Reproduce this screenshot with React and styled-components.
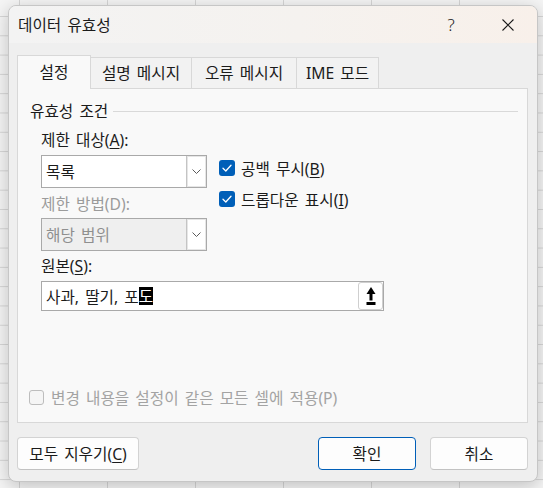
import styled, { createGlobalStyle } from "styled-components";

const GlobalStyle = createGlobalStyle`
  html, body {
    margin: 0;
    padding: 0;
  }
  body {
    width: 543px;
    height: 488px;
    overflow: hidden;
    background-color: #f5f5f5;
    background-image:
      linear-gradient(to right, #d6d6d6 1px, transparent 1px),
      linear-gradient(to bottom, #d6d6d6 1px, transparent 1px);
    background-size: 88px 100%, 100% 19.3px;
    background-position: 19px 0, 0 16px;
    font-family: "Noto Sans", "Noto Sans CJK KR", sans-serif;
    font-size: 15.7px;
    word-spacing: 2px;
    color: #1b1b1b;
  }
`;

const Page = styled.div`
  padding: 5px 0 0 8px;
`;

const Dialog = styled.div`
  width: 530px;
  height: 477px;
  box-sizing: border-box;
  border: 1px solid #c6c6c6;
  border-radius: 8px;
  background: #efefef;
  box-shadow: 0 4px 18px rgba(0, 0, 0, 0.22);
  overflow: hidden;
  display: flex;
  flex-direction: column;
`;

const TitleBar = styled.div`
  height: 37px;
  flex: none;
  display: flex;
  align-items: center;
  padding: 0 6px 0 9px;
  background: linear-gradient(to right, #f3f3f3 0%, #f5f2ef 55%, #f8f0ea 100%);
`;

const Title = styled.div`
  flex: 1;
  line-height: 20px;
  margin-top: 1px;
`;

const TitleButton = styled.div`
  width: 46px;
  height: 32px;
  display: flex;
  align-items: center;
  justify-content: center;
  font-size: 17px;
  font-weight: 300;
  margin-left: ${(p) => p.$gap || 0}px;
`;

const Body = styled.div`
  flex: 1;
  display: flex;
  flex-direction: column;
  padding: 12px 9px 11px 8px;
`;

const TabRow = styled.div`
  display: flex;
  align-items: flex-end;
  margin-bottom: -1px;
  position: relative;
  z-index: 1;
`;

const Tab = styled.div`
  width: ${(p) => p.$width}px;
  height: ${(p) => (p.$active ? 34 : 32)}px;
  box-sizing: border-box;
  border: 1px solid #d8d8d8;
  border-bottom: ${(p) => (p.$active ? "none" : "1px solid #d8d8d8")};
  background: ${(p) => (p.$active ? "#f9f9f9" : "#f2f2f2")};
  margin-left: ${(p) => (p.$first ? 0 : -1)}px;
  display: flex;
  align-items: center;
  justify-content: center;
  padding-bottom: ${(p) => (p.$active ? 3 : 1)}px;
`;

const Panel = styled.div`
  height: 335px;
  box-sizing: border-box;
  border: 1px solid #d8d8d8;
  background: #f9f9f9;
  display: flex;
  flex-direction: column;
`;

const GroupHeader = styled.div`
  display: flex;
  align-items: center;
  gap: 5px;
  margin: 12px 9px 0 12px;
  line-height: 20px;
`;

const GroupLine = styled.div`
  flex: 1;
  height: 1px;
  background: #d9d9d9;
  margin-top: 1px;
`;

const Fields = styled.div`
  padding-left: 23px;
`;

const Grid = styled.div`
  display: grid;
  grid-template-columns: 166px auto;
  column-gap: 12px;
`;

const Column = styled.div`
  display: flex;
  flex-direction: column;
`;

const Label = styled.div`
  line-height: 20px;
  margin-top: ${(p) => p.$top}px;
  color: ${(p) => (p.$disabled ? "#9b9b9b" : "#1b1b1b")};
  u {
    text-underline-offset: 2px;
  }
`;

const Select = styled.div`
  height: 33px;
  box-sizing: border-box;
  margin-top: ${(p) => p.$top}px;
  border: 1px solid #a9a9a9;
  background: ${(p) => (p.$disabled ? "#efefef" : "#ffffff")};
  color: ${(p) => (p.$disabled ? "#8f8f8f" : "#1b1b1b")};
  display: flex;
  align-items: center;
`;

const SelectText = styled.div`
  flex: 1;
  padding-left: 4px;
`;

const DropButton = styled.div`
  width: 20px;
  height: 100%;
  box-sizing: border-box;
  border-left: 1px solid #c4c4c4;
  box-shadow: inset 0 0 0 1px #e6e6e6;
  background: #fff;
  display: flex;
  align-items: center;
  justify-content: center;
`;

const CheckRow = styled.div`
  display: flex;
  align-items: center;
  gap: ${(p) => p.$gap || 6}px;
  height: 22px;
  margin-top: ${(p) => p.$top || 0}px;
  color: ${(p) => (p.$disabled ? "#a3a3a3" : "#1b1b1b")};
  u {
    text-underline-offset: 2px;
  }
`;

const CheckBox = styled.div`
  width: ${(p) => (p.$checked ? 16 : 15)}px;
  height: ${(p) => (p.$checked ? 16 : 15)}px;
  box-sizing: border-box;
  border-radius: 3px;
  background: ${(p) => (p.$checked ? "#005fb8" : "#f5f5f5")};
  border: ${(p) => (p.$checked ? "none" : "1px solid #bdbdbd")};
  display: flex;
  align-items: center;
  justify-content: center;
  flex: none;
`;

const SourceInput = styled.div`
  width: 343px;
  height: 30px;
  box-sizing: border-box;
  margin-top: 5px;
  border: 1px solid #a9a9a9;
  background: #fff;
  display: flex;
  align-items: center;
`;

const SourceText = styled.div`
  flex: 1;
  padding-left: 4px;
  display: flex;
  align-items: center;
  white-space: pre;
`;

const Composing = styled.span`
  display: inline-block;
  background: #000;
  color: #fff;
  line-height: 18px;
  height: 18px;
`;

const PickButton = styled.div`
  width: 25px;
  height: 28px;
  box-sizing: border-box;
  border: 1px solid #cfcfcf;
  border-radius: 3px;
  background: #fff;
  display: flex;
  align-items: center;
  justify-content: center;
`;

const BottomCheck = styled.div`
  margin-top: auto;
  margin-bottom: 14px;
  padding-left: 11px;
`;

const Footer = styled.div`
  display: flex;
  margin-top: 14px;
  gap: 14px;
`;

const Button = styled.div`
  width: ${(p) => p.$width}px;
  height: 33px;
  box-sizing: border-box;
  border: 1px solid ${(p) => (p.$primary ? "#005fb8" : "#d3d3d3")};
  border-bottom-color: ${(p) => (p.$primary ? "#005fb8" : "#c2c2c2")};
  border-radius: 4px;
  background: #fdfdfd;
  display: flex;
  align-items: center;
  justify-content: center;
  margin-left: ${(p) => (p.$push ? "auto" : "0")};
  u {
    text-underline-offset: 2px;
  }
`;

const Chevron = () => (
  <svg width="9" height="5" viewBox="0 0 9 5">
    <polyline points="0.5,0.5 4.5,4.5 8.5,0.5" fill="none" stroke="#5a5a5a" strokeWidth="1" />
  </svg>
);

const Check = () => (
  <svg width="16" height="16" viewBox="0 0 16 16">
    <polyline points="4,8.3 6.8,11 12,5.3" fill="none" stroke="#fff" strokeWidth="1.3" strokeLinecap="round" strokeLinejoin="round" />
  </svg>
);

const CloseIcon = () => (
  <svg width="12" height="12" viewBox="0 0 12 12">
    <path d="M0.5 0.5 L11.5 11.5 M11.5 0.5 L0.5 11.5" stroke="#1b1b1b" strokeWidth="1.1" />
  </svg>
);

const UploadIcon = () => (
  <svg width="10" height="18" viewBox="0 0 10 18">
    <polygon points="5,0 9.5,7 0.5,7" fill="#000" />
    <rect x="3.5" y="6.5" width="3" height="7" fill="#000" />
    <rect x="0.5" y="15" width="9" height="3" fill="#000" />
  </svg>
);

const tabs = [
  { label: "설정", width: 74, active: true },
  { label: "설명 메시지", width: 102 },
  { label: "오류 메시지", width: 106 },
  { label: "IME 모드", width: 83 },
];

export default function App() {
  return (
    <>
      <GlobalStyle />
      <Page>
        <Dialog>
          <TitleBar>
            <Title>데이터 유효성</Title>
            <TitleButton>?</TitleButton>
            <TitleButton $gap={11}>
              <CloseIcon />
            </TitleButton>
          </TitleBar>
          <Body>
            <TabRow>
              {tabs.map((t, i) => (
                <Tab key={t.label} $width={t.width} $active={t.active} $first={i === 0}>
                  {t.label}
                </Tab>
              ))}
            </TabRow>
            <Panel>
              <GroupHeader>
                유효성 조건
                <GroupLine />
              </GroupHeader>
              <Fields>
                <Grid>
                  <Column>
                    <Label $top={9}>
                      제한 대상(<u>A</u>):
                    </Label>
                    <Select $top={5}>
                      <SelectText>목록</SelectText>
                      <DropButton>
                        <Chevron />
                      </DropButton>
                    </Select>
                    <Label $top={6} $disabled>
                      제한 방법(D):
                    </Label>
                    <Select $top={4} $disabled>
                      <SelectText>해당 범위</SelectText>
                      <DropButton>
                        <Chevron />
                      </DropButton>
                    </Select>
                  </Column>
                  <Column>
                    <CheckRow $top={36}>
                      <CheckBox $checked>
                        <Check />
                      </CheckBox>
                      <span>
                        공백 무시(<u>B</u>)
                      </span>
                    </CheckRow>
                    <CheckRow $top={9}>
                      <CheckBox $checked>
                        <Check />
                      </CheckBox>
                      <span>
                        드롭다운 표시(<u>I</u>)
                      </span>
                    </CheckRow>
                  </Column>
                </Grid>
                <Label $top={5}>
                  원본(<u>S</u>):
                </Label>
                <SourceInput>
                  <SourceText>
                    사과, 딸기, 포<Composing>도</Composing>
                  </SourceText>
                  <PickButton>
                    <UploadIcon />
                  </PickButton>
                </SourceInput>
              </Fields>
              <BottomCheck>
                <CheckRow $disabled $gap={7}>
                  <CheckBox />
                  <span>변경 내용을 설정이 같은 모든 셀에 적용(P)</span>
                </CheckRow>
              </BottomCheck>
            </Panel>
            <Footer>
              <Button $width={122}>
                모두 지우기(<u>C</u>)
              </Button>
              <Button $width={98} $primary $push>
                확인
              </Button>
              <Button $width={98}>취소</Button>
            </Footer>
          </Body>
        </Dialog>
      </Page>
    </>
  );
}
